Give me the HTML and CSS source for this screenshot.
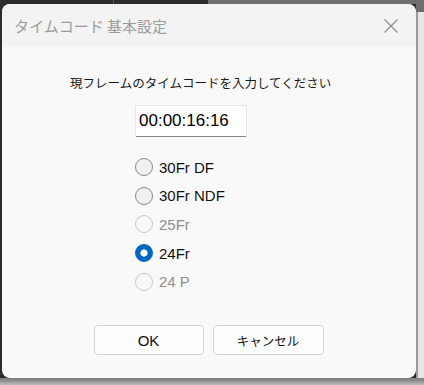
FILE: index.html
```html
<!DOCTYPE html>
<html lang="ja">
<head>
<meta charset="utf-8">
<title>タイムコード 基本設定</title>
<link rel="stylesheet" href="styles.css">
</head>
<body>
<div class="dialog">
  <div class="titlebar">
    <span class="title">タイムコード 基本設定</span>
    <svg class="close" width="16" height="16" viewBox="0 0 16 16"><path d="M1.5 1.5 L14.5 14.5 M14.5 1.5 L1.5 14.5" stroke="#8c8c8c" stroke-width="1.2" fill="none"/></svg>
  </div>
  <div class="content">
    <p class="prompt">現フレームのタイムコードを入力してください</p>
    <input class="tc" type="text" value="00:00:16:16">
    <div class="options">
      <label class="opt"><input type="radio" name="fr"><span>30Fr DF</span></label>
      <label class="opt"><input type="radio" name="fr"><span>30Fr NDF</span></label>
      <label class="opt off"><input type="radio" name="fr" disabled><span>25Fr</span></label>
      <label class="opt"><input type="radio" name="fr" checked><span>24Fr</span></label>
      <label class="opt off"><input type="radio" name="fr" disabled><span>24 P</span></label>
    </div>
    <div class="buttons">
      <button class="btn ok">OK</button>
      <button class="btn cancel">キャンセル</button>
    </div>
  </div>
</div>
</body>
</html>
```
FILE: styles.css
```css
html, body {
  margin: 0;
  padding: 0;
}
body {
  width: 424px;
  height: 385px;
  overflow: hidden;
  font-family: "Liberation Sans", "Noto Sans CJK JP", sans-serif;
  background:
    linear-gradient(to bottom, #7d7d7d 0, #8e8e8e 3px, #a9a9a9 5px, #bdbdbd 7px) 0 378px / 424px 7px no-repeat,
    linear-gradient(to right, #d4212b, #d4212b) 113px 0 / 1px 4px no-repeat,
    linear-gradient(to right, #2c2c2c 0, #2c2c2c 208px, #6e6e6e 208px) 0 0 / 424px 4px no-repeat,
    linear-gradient(#6e6e6e, #6e6e6e) 416px 0 / 8px 12px no-repeat,
    linear-gradient(to right, #9a9a9a 0, #9a9a9a 2px, #e6e6e6 2px) 416px 0 / 8px 385px no-repeat,
    #2c2c2c;
}
.dialog {
  margin: 4px 0 0 2px;
  width: 414px;
  height: 374px;
  border-radius: 8px;
  background: #f9f9f9;
  overflow: hidden;
  display: flex;
  flex-direction: column;
}
.titlebar {
  height: 43px;
  background: #f3f3f3;
  display: flex;
  align-items: center;
  justify-content: space-between;
  padding: 0 17px 0 12px;
  flex: none;
}
.title {
  font-family: "Noto Sans CJK JP", sans-serif;
  font-size: 15px;
  color: #9b9b9b;
  margin-top: -1px;
}
.close {
  display: block;
  margin-top: 1px;
}
.content {
  flex: 1;
  display: flex;
  flex-direction: column;
  align-items: flex-start;
  padding: 0 0 23px 68px;
}
.prompt {
  margin: 26px 0 0 0;
  font-family: "Noto Sans CJK JP", sans-serif;
  font-size: 12.5px;
  line-height: 20px;
  color: #1a1a1a;
}
.tc {
  margin: 12px 0 0 65px;
  box-sizing: border-box;
  width: 112px;
  height: 32px;
  border: 1px solid #e6e6e6;
  border-bottom-color: #868686;
  border-radius: 2px;
  background: #ffffff;
  padding: 0 0 0 3px;
  font-family: "Liberation Sans", sans-serif;
  font-size: 17px;
  color: #000;
  outline: none;
}
.options {
  margin: 21px 0 0 65px;
  display: flex;
  flex-direction: column;
  gap: 10.7px;
}
.opt {
  display: flex;
  align-items: center;
  gap: 6px;
  height: 18px;
  font-size: 15px;
  color: #111;
}
.opt input {
  appearance: none;
  -webkit-appearance: none;
  margin: 0;
  width: 18px;
  height: 18px;
  box-sizing: border-box;
  border-radius: 50%;
  border: 1px solid #8a8a8a;
  background: #f1f1f1;
}
.opt input:checked {
  border-color: #0067c0;
  background: radial-gradient(circle, #ffffff 0, #ffffff 3.3px, #0067c0 3.9px);
}
.opt.off {
  color: #8d8d8d;
}
.opt.off input {
  border-color: #c6c6c6;
  background: #f9f9f9;
}
.buttons {
  margin-top: auto;
  align-self: stretch;
  margin-left: -68px;
  display: flex;
  justify-content: center;
  gap: 9px;
  padding-right: 1px;
}
.btn {
  box-sizing: border-box;
  height: 30px;
  border: 1px solid #d5d5d5;
  border-radius: 4px;
  background: #fdfdfd;
  font-family: "Liberation Sans", "Noto Sans CJK JP", sans-serif;
  color: #111;
  padding: 0;
}
.ok {
  width: 110px;
  font-size: 15px;
}
.cancel {
  width: 111px;
  font-size: 12.5px;
}
```
